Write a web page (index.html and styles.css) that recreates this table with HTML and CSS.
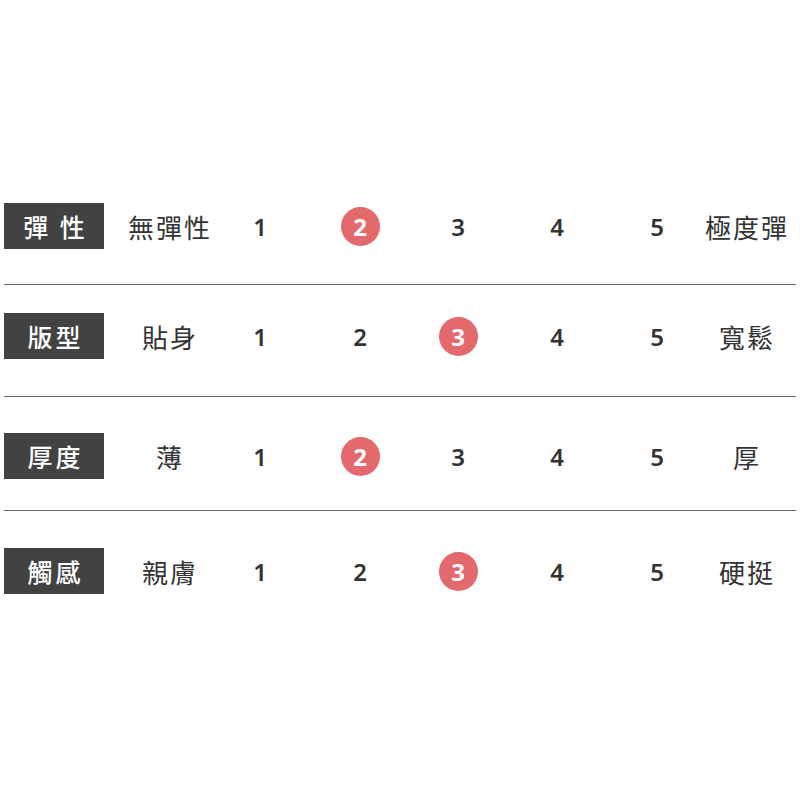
FILE: index.html
```html
<!DOCTYPE html>
<html lang="zh-Hant">
<head>
<meta charset="utf-8">
<title>尺寸說明</title>
<link rel="stylesheet" href="styles.css">
</head>
<body>
<div class="table">
  <div class="row row-1">
    <div class="label">彈 性</div>
    <div class="desc">無彈性</div>
    <div class="num">1</div>
    <div class="num"><span class="dot">2</span></div>
    <div class="num">3</div>
    <div class="num">4</div>
    <div class="num">5</div>
    <div class="desc">極度彈</div>
  </div>
  <div class="row row-2">
    <div class="label">版型</div>
    <div class="desc">貼身</div>
    <div class="num">1</div>
    <div class="num">2</div>
    <div class="num"><span class="dot">3</span></div>
    <div class="num">4</div>
    <div class="num">5</div>
    <div class="desc">寬鬆</div>
  </div>
  <div class="row row-3">
    <div class="label">厚度</div>
    <div class="desc">薄</div>
    <div class="num">1</div>
    <div class="num"><span class="dot">2</span></div>
    <div class="num">3</div>
    <div class="num">4</div>
    <div class="num">5</div>
    <div class="desc">厚</div>
  </div>
  <div class="row row-4">
    <div class="label">觸感</div>
    <div class="desc">親膚</div>
    <div class="num">1</div>
    <div class="num">2</div>
    <div class="num"><span class="dot">3</span></div>
    <div class="num">4</div>
    <div class="num">5</div>
    <div class="desc">硬挺</div>
  </div>
</div>
</body>
</html>
```

FILE: styles.css
```css
html, body {
  margin: 0;
  padding: 0;
  background: #ffffff;
}

body {
  font-family: "Noto Sans CJK TC", "Noto Sans", sans-serif;
  color: #333333;
}

.table {
  padding-top: 203px;
  margin: 0 4px;
}

.row {
  display: grid;
  grid-template-columns: 121px 90px 90px 110px 86px 112px 88px 92px;
  align-items: center;
  justify-items: center;
  height: 46px;
  box-sizing: content-box;
}

.row-1 {
  padding-bottom: 35px;
  border-bottom: 1px solid #6a6a6a;
}

.row-2 {
  padding-top: 28px;
  padding-bottom: 37px;
  border-bottom: 1px solid #6a6a6a;
}

.row-3 {
  padding-top: 36px;
  padding-bottom: 31px;
  border-bottom: 1px solid #6a6a6a;
}

.row-4 {
  padding-top: 37px;
}

.label {
  justify-self: start;
  width: 100px;
  height: 46px;
  background: #424242;
  color: #ffffff;
  font-size: 25px;
  font-weight: 500;
  letter-spacing: 3px;
  display: flex;
  align-items: center;
  justify-content: center;
  padding-left: 3px;
  box-sizing: border-box;
  white-space: nowrap;
}

.desc {
  font-size: 26px;
  font-weight: 400;
  letter-spacing: 2px;
  white-space: nowrap;
  color: #333333;
}

.num {
  font-family: "Noto Sans", sans-serif;
  font-size: 24px;
  font-weight: 600;
  color: #333333;
  display: flex;
  align-items: center;
  justify-content: center;
}

.dot {
  width: 39px;
  height: 39px;
  border-radius: 50%;
  background: #e3696d;
  color: #ffffff;
  font-weight: 700;
  display: flex;
  align-items: center;
  justify-content: center;
}
```
